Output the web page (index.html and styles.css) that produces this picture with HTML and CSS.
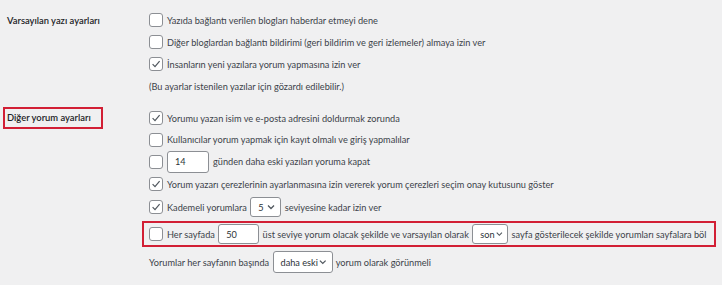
FILE: index.html
```html
<!DOCTYPE html>
<html lang="tr">
<head>
  <meta charset="UTF-8">
  <title>Tartışma ayarları</title>
  <link rel="stylesheet" href="styles.css">
</head>
<body>

<div class="section first">
  <div class="label"><span>Varsayılan yazı ayarları</span></div>
  <div class="fields">
    <div class="row"><span class="cb"></span>Yazıda bağlantı verilen blogları haberdar etmeyi dene</div>
    <div class="row"><span class="cb"></span>Diğer bloglardan bağlantı bildirimi (geri bildirim ve geri izlemeler) almaya izin ver</div>
    <div class="row"><span class="cb checked"><svg viewBox="0 0 12 12"><path d="M2.6 6.2 L5 8.6 L9.6 3.2"/></svg></span>İnsanların yeni yazılara yorum yapmasına izin ver</div>
    <div class="row note">(Bu ayarlar istenilen yazılar için gözardı edilebilir.)</div>
  </div>
</div>

<div class="section">
  <div class="label"><span class="marked">Diğer yorum ayarları</span></div>
  <div class="fields">
    <div class="row"><span class="cb checked"><svg viewBox="0 0 12 12"><path d="M2.6 6.2 L5 8.6 L9.6 3.2"/></svg></span>Yorumu yazan isim ve e-posta adresini doldurmak zorunda</div>
    <div class="row short"><span class="cb"></span>Kullanıcılar yorum yapmak için kayıt olmalı ve giriş yapmalılar</div>
    <div class="row tall"><span class="cb"></span><span class="field days">14</span>günden daha eski yazıları yoruma kapat</div>
    <div class="row"><span class="cb checked"><svg viewBox="0 0 12 12"><path d="M2.6 6.2 L5 8.6 L9.6 3.2"/></svg></span>Yorum yazarı çerezlerinin ayarlanmasına izin vererek yorum çerezleri seçim onay kutusunu göster</div>
    <div class="row taller"><span class="cb checked"><svg viewBox="0 0 12 12"><path d="M2.6 6.2 L5 8.6 L9.6 3.2"/></svg></span>Kademeli yorumlara <span class="select depth">5<svg viewBox="0 0 10 10"><path d="M2 3.5 L5 6.5 L8 3.5"/></svg></span> seviyesine kadar izin ver</div>
    <div class="row boxed"><span class="cb"></span>Her sayfada <span class="field per-page">50</span> üst seviye yorum olacak şekilde ve varsayılan olarak <span class="select page">son<svg viewBox="0 0 10 10"><path d="M2 3.5 L5 6.5 L8 3.5"/></svg></span> sayfa gösterilecek şekilde yorumları sayfalara böl</div>
    <div class="row last">Yorumlar her sayfanın başında <span class="select order">daha eski<svg viewBox="0 0 10 10"><path d="M2 3.5 L5 6.5 L8 3.5"/></svg></span> yorum olarak görünmeli</div>
  </div>
</div>

</body>
</html>
```

FILE: styles.css
```css
body {
  margin: 0;
  background: #f0f0f1;
  color: #3c434a;
  font-family: Lato, sans-serif;
  font-size: 9.2px;
}
.section {
  display: grid;
  grid-template-columns: 142px 1fr;
  margin-top: 10px;
}
.section.first {
  margin-top: 9px;
}
.label {
  height: 22px;
  display: flex;
  align-items: center;
  font-size: 9.4px;
  font-weight: 600;
  color: #1d2327;
  white-space: nowrap;
}
.label span {
  padding-left: 7px;
}
.label .marked {
  margin-left: 3px;
  padding: 0 0 0 2px;
  height: 18px;
  width: 94px;
  line-height: 18px;
  border: 2px solid #d21f35;
}
.fields {
  padding-left: 7px;
}
.row {
  height: 22px;
  display: flex;
  align-items: center;
  white-space: pre;
}
.row.short {
  height: 21px;
}
.row.tall {
  height: 23px;
}
.row.taller {
  height: 24px;
}
.row.boxed {
  margin: 2px 6px 0 -7px;
  padding-left: 5px;
  height: 22px;
  border: 2px solid #d21f35;
}
.row.last {
  margin-top: 3px;
  height: 24px;
}
.cb {
  width: 12px;
  height: 12px;
  border: 1px solid #8c8f94;
  border-radius: 3px;
  background: #fff;
  margin-right: 4px;
  flex: none;
  display: flex;
}
.cb svg {
  width: 12px;
  height: 12px;
  fill: none;
  stroke: #50575e;
  stroke-width: 1.2;
}
.field, .select {
  display: inline-flex;
  align-items: center;
  box-sizing: border-box;
  background: #fff;
  border: 1px solid #8c8f94;
  border-radius: 3px;
  padding-left: 7px;
  color: #2c3338;
  margin: 0 1px;
}
.field.days {
  width: 42px;
  height: 22px;
  margin: 0 4px 0 0;
}
.field.per-page {
  width: 41px;
  height: 20px;
}
.select {
  justify-content: space-between;
  padding-right: 4px;
  height: 20px;
}
.select svg {
  width: 10px;
  height: 10px;
  fill: none;
  stroke: #50575e;
  stroke-width: 1.3;
}
.select.depth {
  width: 31px;
}
.select.page {
  width: 36px;
}
.select.order {
  width: 60px;
  height: 22px;
}
```
